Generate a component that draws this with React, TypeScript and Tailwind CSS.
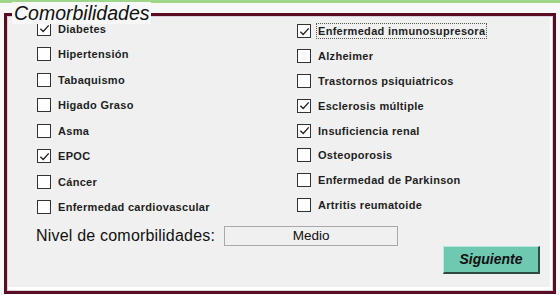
import { useState } from "react";

const left = [
  { label: "Diabetes", checked: true },
  { label: "Hipertensión", checked: false },
  { label: "Tabaquismo", checked: false },
  { label: "Higado Graso", checked: false },
  { label: "Asma", checked: false },
  { label: "EPOC", checked: true },
  { label: "Cáncer", checked: false },
  { label: "Enfermedad cardiovascular", checked: false },
];

const right = [
  { label: "Enfermedad inmunosupresora", checked: true, focus: true },
  { label: "Alzheimer", checked: false },
  { label: "Trastornos psiquiatricos", checked: false },
  { label: "Esclerosis múltiple", checked: true },
  { label: "Insuficiencia renal", checked: true },
  { label: "Osteoporosis", checked: false },
  { label: "Enfermedad de Parkinson", checked: false },
  { label: "Artritis reumatoide", checked: false },
];

function Check({
  label,
  checked,
  focus,
  rowClass,
}: {
  label: string;
  checked: boolean;
  focus?: boolean;
  rowClass: string;
}) {
  const [on, setOn] = useState(checked);
  return (
    <button
      onClick={() => setOn(!on)}
      className={`flex items-center gap-[6px] text-left ${rowClass}`}
    >
      <span className="w-[14px] h-[14px] shrink-0 border border-[#333] bg-white flex items-center justify-center">
        {on && (
          <svg viewBox="0 0 12 12" className="w-[11px] h-[11px]">
            <path
              d="M1.5 6.2 L4.6 9.2 L10.6 2.6"
              fill="none"
              stroke="#222"
              strokeWidth="1.5"
            />
          </svg>
        )}
      </span>
      <span
        className={`text-[11px] font-bold text-[#1e1e1e] tracking-[0.3px] leading-[14px] px-[1px] ${
          focus ? "outline outline-1 outline-dotted outline-[#555]" : ""
        }`}
      >
        {label}
      </span>
    </button>
  );
}

export default function App() {
  return (
    <div
      className="w-[560px] h-[295px] bg-[#f8f8f8] relative overflow-hidden"
      style={{ fontFamily: '"Liberation Sans", Arial, sans-serif' }}
    >
      {/* top accent line */}
      <div className="h-[3px] bg-[#9ed68a]" />

      {/* group box */}
      <div className="mt-[10px] ml-[4px] w-[552px] h-[281px] border-[3px] border-[#5a0d22] bg-[#f0f0f0] shadow-[inset_0_0_0_1px_#d9d0dc,inset_-2px_-3px_0_1px_#ffffff]">
        <div className="grid grid-cols-[260px_1fr] pl-[30px]">
          <div className="flex flex-col">
            {left.map((it) => (
              <Check key={it.label} {...it} rowClass="h-[25.5px]" />
            ))}
          </div>
          <div className="flex flex-col pt-[3px]">
            {right.map((it) => (
              <Check key={it.label} {...it} rowClass="h-[24.8px]" />
            ))}
          </div>
        </div>

        <div className="flex items-center h-[20px] gap-[9px] pl-[29px] mt-[6px]">
          <span className="text-[16px] text-[#111] tracking-[0.2px]">
            Nivel de comorbilidades:
          </span>
          <div className="w-[174px] h-[20px] border border-[#a9a9a9] bg-[#f0f0f0] flex items-center justify-center text-[13.5px] text-[#111]">
            Medio
          </div>
        </div>

        <div className="flex justify-end pr-[13px]">
          <button className="w-[97px] h-[28px] bg-[#6fc8b0] border-t border-l border-[#b8e6d8] border-r-2 border-b-2 border-r-[#2e4a42] border-b-[#2e4a42] text-[14px] font-bold italic text-[#111]">
            Siguiente
          </button>
        </div>
      </div>

      {/* legend title over the frame */}
      <div className="absolute left-[12px] top-[2px] px-[2px] bg-[#f8f8f8] text-[19.5px] italic text-[#111] leading-[22px]">
        Comorbilidades
      </div>
    </div>
  );
}
